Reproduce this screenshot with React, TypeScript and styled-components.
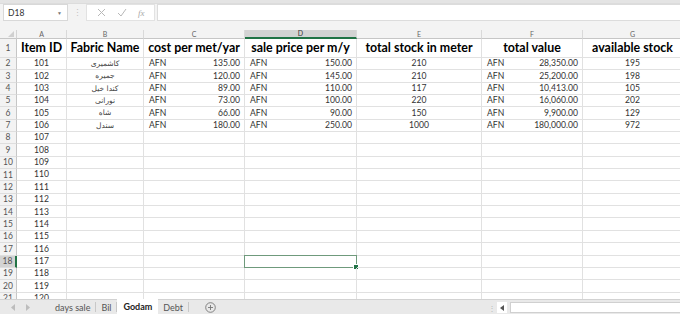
import React from "react";
import styled, { createGlobalStyle } from "styled-components";

const Global = createGlobalStyle`
  html, body { margin: 0; padding: 0; background: #fff; }
  body { font-family: Lato, "Noto Sans", sans-serif; }
  * { box-sizing: border-box; }
`;

const Frame = styled.div`
  width: 680px;
  height: 314px;
  display: flex;
  flex-direction: column;
  overflow: hidden;
  background: #f3f3f3;
`;

const TopStrip = styled.div`
  height: 4px;
  background: #e4e4e4;
  border-bottom: 1px solid #dcdcdc;
  flex: none;
`;

const FormulaBar = styled.div`
  height: 17px;
  flex: none;
  display: flex;
  align-items: stretch;
  padding-left: 3px;
`;

const NameBox = styled.div`
  width: 65px;
  background: #fff;
  border: 1px solid #d8d8d8;
  display: flex;
  align-items: center;
  justify-content: space-between;
  padding: 0 5px 0 4px;
  font-size: 8.5px;
  color: #333;
`;

const Caret = styled.span`
  font-size: 5px;
  color: #777;
`;

const Grip = styled.div`
  width: 18px;
  display: flex;
  align-items: center;
  justify-content: center;
  color: #c4c4c4;
  font-size: 9px;
`;

const IconBox = styled.div`
  width: 69px;
  background: #fff;
  border: 1px solid #e2e2e2;
  display: flex;
  align-items: center;
  justify-content: space-around;
  padding: 0 4px;
`;

const Fx = styled.span`
  font-family: "Liberation Serif", serif;
  font-style: italic;
  font-size: 9px;
  color: #a8a8a8;
`;

const FormulaInput = styled.div`
  flex: 1;
  margin-left: 2px;
  background: #fff;
  border: 1px solid #dcdcdc;
  border-right: none;
`;

const Gap = styled.div`
  height: 9px;
  flex: none;
`;

const Sheet = styled.div`
  flex: 1;
  overflow: hidden;
  display: grid;
  grid-template-columns: 17px 50px 77px 101px 112px 125px 101px 100px;
  grid-template-rows: 9px 19px repeat(21, 12.35px);
  background: #fff;
  align-content: start;
`;

const Corner = styled.div`
  background: #f3f3f3;
  border-right: 1px solid #d4d4d4;
  border-bottom: 1px solid #c6c6c6;
  position: relative;
  &::after {
    content: "";
    position: absolute;
    right: 2px;
    bottom: 1px;
    width: 0;
    height: 0;
    border-left: 6px solid transparent;
    border-bottom: 6px solid #d0d0d0;
  }
`;

const ColHead = styled.div<{ $sel?: boolean }>`
  background: ${(p) => (p.$sel ? "#d3d3d3" : "#f3f3f3")};
  border-right: 1px solid #d9d9d9;
  border-bottom: ${(p) => (p.$sel ? "2px solid #217346" : "1px solid #c6c6c6")};
  display: flex;
  align-items: center;
  justify-content: center;
  font-size: 7px;
  color: ${(p) => (p.$sel ? "#333" : "#666")};
  line-height: 1;
`;

const RowHead = styled.div<{ $sel?: boolean }>`
  background: ${(p) => (p.$sel ? "#d3d3d3" : "#f3f3f3")};
  border-right: ${(p) => (p.$sel ? "2px solid #217346" : "1px solid #c6c6c6")};
  border-bottom: 1px solid #dedede;
  display: flex;
  align-items: center;
  justify-content: center;
  font-size: 8.5px;
  color: #555;
  line-height: 1;
`;

const Cell = styled.div<{ $head?: boolean; $sel?: boolean }>`
  border-right: 1px solid #e1e1e1;
  border-bottom: 1px solid #e1e1e1;
  display: flex;
  align-items: center;
  justify-content: center;
  padding: 0 4px;
  white-space: nowrap;
  font-size: ${(p) => (p.$head ? "12.4px" : "8.6px")};
  font-weight: ${(p) => (p.$head ? 700 : 400)};
  color: ${(p) => (p.$head ? "#000" : "#333")};
  line-height: 1;
  position: relative;
  min-width: 0;
  ${(p) =>
    p.$sel
      ? `&::before { content: ""; position: absolute; left: -1px; top: -1px; right: -1px; bottom: -1px; border: 1px solid #6f9a7c; }
         &::after { content: ""; position: absolute; right: -3px; bottom: -3px; width: 4px; height: 4px; background: #217346; border: 1px solid #fff; }`
      : ""}
`;

const Money = styled.div`
  flex: 1;
  display: flex;
  justify-content: space-between;
  padding-left: 1px;
`;

const Arabic = styled.span`
  font-family: "DejaVu Sans", sans-serif;
  font-size: 7.5px;
  color: #444;
`;

const TabBar = styled.div`
  height: 15px;
  flex: none;
  display: flex;
  align-items: stretch;
  background: #e9e9e9;
  border-top: 1px solid #d2d2d2;
  font-size: 9px;
  color: #444;
`;

const Nav = styled.div`
  width: 50px;
  display: flex;
  align-items: center;
  gap: 9px;
  padding-left: 11px;
`;

const Tab = styled.div<{ $active?: boolean }>`
  display: flex;
  align-items: center;
  padding: 0 ${(p) => (p.$active ? "6px" : "5px")};
  background: ${(p) => (p.$active ? "#fff" : "transparent")};
  font-weight: ${(p) => (p.$active ? 700 : 400)};
  color: ${(p) => (p.$active ? "#222" : "#555")};
  border-right: ${(p) => (p.$active ? "none" : "1px solid #c8c8c8")};
  margin-top: ${(p) => (p.$active ? "-1px" : "2px")};
  margin-bottom: ${(p) => (p.$active ? "0" : "2px")};
`;

const AddTab = styled.div`
  width: 42px;
  display: flex;
  align-items: center;
  justify-content: center;
`;

const TabSpacer = styled.div`
  flex: 1;
`;

const HScroll = styled.div`
  width: 192px;
  display: flex;
  align-items: center;
  gap: 3px;
  padding-top: 1px;
`;

const ScrollGrip = styled.div`
  width: 6px;
  color: #bbb;
  font-size: 8px;
  text-align: center;
`;

const ScrollBtn = styled.div`
  width: 10px;
  height: 11px;
  background: #fff;
  display: flex;
  align-items: center;
  justify-content: center;
`;

const ScrollTrack = styled.div`
  flex: 1;
  height: 11px;
  background: #fff;
  border: 1px solid #d0d0d0;
  border-right: none;
`;

type Row = [number, string, number, number, number, number, number];

const data: Row[] = [
  [101, "کاشمیری", 135, 150, 210, 28350, 195],
  [102, "جمیره", 120, 145, 210, 25200, 198],
  [103, "کندا خیل", 89, 110, 117, 10413, 105],
  [104, "نورانی", 73, 100, 220, 16060, 202],
  [105, "شاه", 66, 90, 150, 9900, 129],
  [106, "سندل", 180, 250, 1000, 180000, 972],
];

const fmt = (n: number) =>
  n.toLocaleString("en-US", { minimumFractionDigits: 2, maximumFractionDigits: 2 });

const cols = ["A", "B", "C", "D", "E", "F", "G"];
const headers = [
  "Item ID",
  "Fabric Name",
  "cost per met/yar",
  "sale price per m/y",
  "total stock in meter",
  "total value",
  "available stock",
];

const Amount: React.FC<{ v: number }> = ({ v }) => (
  <Money>
    <span>AFN</span>
    <span>{fmt(v)}</span>
  </Money>
);

export default function App() {
  const rows: React.ReactNode[] = [];
  for (let r = 2; r <= 22; r++) {
    const d = data[r - 2];
    const sel = r === 18;
    rows.push(
      <RowHead key={`h${r}`} $sel={sel}>
        {r}
      </RowHead>,
      <Cell key={`a${r}`}>{100 + r - 1}</Cell>,
      <Cell key={`b${r}`}>{d ? <Arabic dir="rtl">{d[1]}</Arabic> : null}</Cell>,
      <Cell key={`c${r}`}>{d ? <Amount v={d[2]} /> : null}</Cell>,
      <Cell key={`d${r}`} $sel={sel}>
        {d ? <Amount v={d[3]} /> : null}
      </Cell>,
      <Cell key={`e${r}`}>{d ? d[4] : null}</Cell>,
      <Cell key={`f${r}`}>{d ? <Amount v={d[5]} /> : null}</Cell>,
      <Cell key={`g${r}`}>{d ? d[6] : null}</Cell>
    );
  }

  return (
    <>
      <Global />
      <Frame>
        <TopStrip />
        <FormulaBar>
          <NameBox>
            D18
            <Caret>▼</Caret>
          </NameBox>
          <Grip>⋮</Grip>
          <IconBox>
            <svg width="9" height="9" viewBox="0 0 9 9">
              <path d="M1 1 L8 8 M8 1 L1 8" stroke="#b8b8b8" strokeWidth="1" fill="none" />
            </svg>
            <svg width="10" height="9" viewBox="0 0 10 9">
              <path d="M1 5 L4 8 L9 1" stroke="#b8b8b8" strokeWidth="1" fill="none" />
            </svg>
            <Fx>fx</Fx>
          </IconBox>
          <FormulaInput />
        </FormulaBar>
        <Gap />
        <Sheet>
          <Corner />
          {cols.map((c) => (
            <ColHead key={c} $sel={c === "D"}>
              {c}
            </ColHead>
          ))}
          <RowHead>1</RowHead>
          {headers.map((h, i) => (
            <Cell key={`hd${i}`} $head>
              {h}
            </Cell>
          ))}
          {rows}
        </Sheet>
        <TabBar>
          <Nav>
            <svg width="5" height="7" viewBox="0 0 5 7">
              <path d="M4 0 L0 3.5 L4 7 Z" fill="#bdbdbd" />
            </svg>
            <svg width="5" height="7" viewBox="0 0 5 7">
              <path d="M1 0 L5 3.5 L1 7 Z" fill="#bdbdbd" />
            </svg>
          </Nav>
          <Tab>days sale</Tab>
          <Tab>Bil</Tab>
          <Tab $active>Godam</Tab>
          <Tab>Debt</Tab>
          <AddTab>
            <svg width="11" height="11" viewBox="0 0 11 11">
              <circle cx="5.5" cy="5.5" r="4.8" stroke="#777" strokeWidth="0.9" fill="none" />
              <path d="M5.5 3 V8 M3 5.5 H8" stroke="#777" strokeWidth="0.9" />
            </svg>
          </AddTab>
          <TabSpacer />
          <HScroll>
            <ScrollGrip>⋮</ScrollGrip>
            <ScrollBtn>
              <svg width="4" height="6" viewBox="0 0 4 6">
                <path d="M4 0 L0 3 L4 6 Z" fill="#555" />
              </svg>
            </ScrollBtn>
            <ScrollTrack />
          </HScroll>
        </TabBar>
      </Frame>
    </>
  );
}
